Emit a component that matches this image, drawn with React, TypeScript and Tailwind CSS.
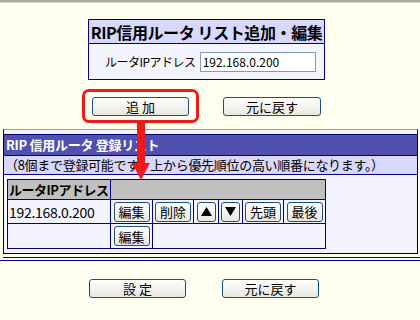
import React from "react";

const font = { fontFamily: '"Noto Sans CJK JP", "DejaVu Sans", sans-serif' };

function Btn({ children, className = "" }: { children: React.ReactNode; className?: string }) {
  return (
    <div
      className={`flex items-center justify-center rounded-[3px] border border-[#1c4f80] bg-gradient-to-b from-white to-[#e8e7e0] text-[13px] leading-none text-black ${className}`}
    >
      {children}
    </div>
  );
}

function SmallBtn({ children, w }: { children: React.ReactNode; w: string }) {
  return (
    <div className="flex justify-center">
      <div
        className={`flex h-[20px] items-center justify-center rounded-[3px] border border-[#1c4f80] bg-gradient-to-b from-white to-[#e8e7e0] text-[13px] leading-none text-black ${w}`}
      >
        {children}
      </div>
    </div>
  );
}

export default function App() {
  return (
    <div className="relative h-[320px] w-[420px] overflow-hidden bg-[#fffff0]" style={font}>
      <div className="h-[2px] bg-[#a9a898]" />
      <div className="h-[1px] bg-[#d8d8c8]" />

      {/* title box */}
      <div className="ml-[88px] mt-[16px] w-[237px] border border-[#000080]">
        <div className="flex h-[24px] items-center justify-center border-b border-[#000080] bg-[#d8d8fc] text-[16px] font-bold leading-none tracking-[-0.4px] text-black">
          RIP信用ルータ リスト追加・編集
        </div>
        <div className="flex h-[35px] items-center bg-[#f4f4ff] pl-[16px]">
          <span className="text-[12px] tracking-[-0.5px] text-black">ルータIPアドレス</span>
          <div className="ml-[4px] flex h-[20px] w-[116px] items-center border border-[#7f9db9] bg-white pl-[2px] text-[12px] text-black">
            192.168.0.200
          </div>
        </div>
      </div>

      {/* add / back buttons */}
      <div className="mt-[17px] flex">
        <Btn className="ml-[92px] h-[19px] w-[97px]">追 加</Btn>
        <Btn className="ml-[34px] h-[19px] w-[98px]">元に戻す</Btn>
      </div>

      {/* list box */}
      <div className="ml-[3px] mt-[13px] h-[125px] w-[415px] border-x border-b border-t border-x-black border-b-black border-t-[#a0a0a0] bg-[#f4f4ff]">
        <div className="mt-[4px] h-[22px] border-y border-[#000080] bg-[#5050b0] pl-[2px] text-[13px] font-bold leading-[20px] tracking-[-0.3px] text-white">
          RIP 信用ルータ 登録リスト
        </div>
        <div className="h-[19px] border-b border-[#000080] bg-[#d8d8fc] pl-[1px] text-[13px] leading-[18px] tracking-[-0.3px] text-black">
          （8個まで登録可能です。上から優先順位の高い順番になります。）
        </div>
        <table className="ml-[3px] mt-[4px] border-collapse text-[13px] text-black">
          <tbody>
            <tr className="h-[20px] bg-[#c0c0c0]">
              <td className="w-[103px] border border-[#000080] pl-[1px] font-bold leading-none tracking-[-0.5px]">
                ルータIPアドレス
              </td>
              <td colSpan={6} className="border border-[#000080]" />
            </tr>
            <tr className="h-[24px]">
              <td className="border border-[#000080] pl-[1px] text-[14px] leading-none tracking-[-0.3px]">192.168.0.200</td>
              <td className="w-[42px] border border-[#000080] p-0">
                <SmallBtn w="w-[36px]">編集</SmallBtn>
              </td>
              <td className="w-[41px] border border-[#000080] p-0">
                <SmallBtn w="w-[36px]">削除</SmallBtn>
              </td>
              <td className="w-[25px] border border-[#000080] p-0">
                <SmallBtn w="w-[19px]">
                  <svg width="11" height="9" viewBox="0 0 11 9">
                    <polygon points="5.5,0 11,9 0,9" fill="#000" />
                  </svg>
                </SmallBtn>
              </td>
              <td className="w-[24px] border border-[#000080] p-0">
                <SmallBtn w="w-[19px]">
                  <svg width="11" height="9" viewBox="0 0 11 9">
                    <polygon points="0,0 11,0 5.5,9" fill="#000" />
                  </svg>
                </SmallBtn>
              </td>
              <td className="w-[41px] border border-[#000080] p-0">
                <SmallBtn w="w-[36px]">先頭</SmallBtn>
              </td>
              <td className="w-[42px] border border-[#000080] p-0">
                <SmallBtn w="w-[36px]">最後</SmallBtn>
              </td>
            </tr>
            <tr className="h-[25px]">
              <td className="border border-[#000080]" />
              <td className="border border-[#000080] p-0">
                <SmallBtn w="w-[36px]">編集</SmallBtn>
              </td>
              <td colSpan={5} className="border border-[#000080]" />
            </tr>
          </tbody>
        </table>
      </div>

      {/* double lines */}
      <div className="mt-[3px] ml-[3px] h-[1px] bg-[#000080]" />
      <div className="mt-[2px] h-[1px] bg-[#000080]" />

      {/* bottom buttons */}
      <div className="mt-[18px] flex">
        <Btn className="ml-[89px] h-[19px] w-[97px]">設 定</Btn>
        <Btn className="ml-[36px] h-[19px] w-[97px]">元に戻す</Btn>
      </div>

      {/* red highlight + arrow overlay */}
      <div className="absolute left-[82px] top-[89px] h-[34px] w-[117px] rounded-[7px] border-[3px] border-[#f01818]" />
      <div className="absolute left-[137px] top-[122px] h-[44px] w-[8px] bg-[#f01818]" />
      <svg className="absolute left-[132px] top-[163px]" width="18" height="17" viewBox="0 0 18 17">
        <polygon points="0,0 18,0 9,17" fill="#f01818" />
      </svg>
    </div>
  );
}
